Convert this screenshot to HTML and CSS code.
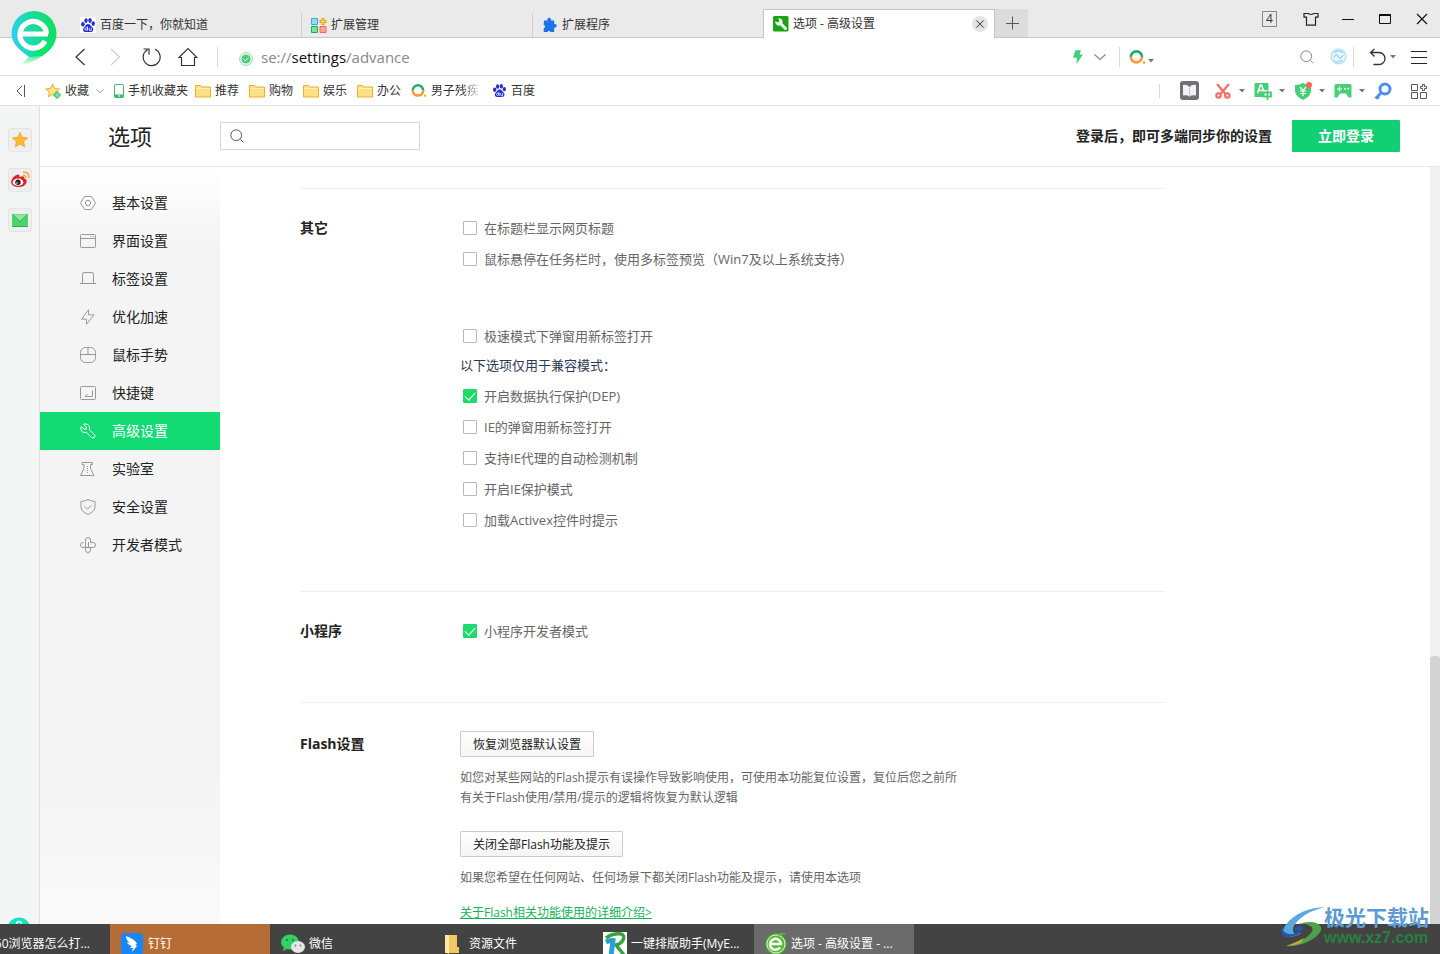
FILE: index.html
```html
<!DOCTYPE html>
<html lang="zh-CN">
<head>
<meta charset="utf-8">
<title>选项 - 高级设置</title>
<link rel="stylesheet" href="styles.css">
</head>
<body>
<svg class="defs" aria-hidden="true">
  <symbol id="paw" viewBox="0 0 16 16">
    <g fill="#2529d8"><ellipse cx="2.900" cy="7.200" rx="1.800" ry="2.300"/><ellipse cx="6" cy="3.600" rx="1.700" ry="2.400"/><ellipse cx="10" cy="3.500" rx="1.700" ry="2.400"/><ellipse cx="13.200" cy="6.600" rx="1.700" ry="2.300"/>
    <path d="M8 7C6 7 5.600 9 4.200 10.200 2.500 11.700 2.800 15 5.500 15h5.200c2.800 0 3.300-3.200 1.600-4.800C10.800 9 10 7 8 7z"/></g>
    <g fill="none" stroke="#fff" stroke-width=".8"><circle cx="6.200" cy="12" r="1.300"/><path d="M7.500 9.500v4M9.300 10.800v2.200q0 .6.700.6h1.300v-2.900"/></g>
  </symbol>
  <symbol id="folder" viewBox="0 0 16 14"><path d="M.5 13V1.500h5L7 3h8.500v10z" fill="#ffdf85" stroke="#e9b228"/><path d="M1 4.500h14" stroke="#fff0bd"/></symbol>
  <symbol id="ring" viewBox="0 0 17 16"><path d="M1.800 8a5.500 5.500 0 0 1 11.200 0" fill="none" stroke="#1fae68" stroke-width="2.600"/><path d="M13 7.800a5.600 5.600 0 0 1-11.200 0" fill="none" stroke="#fb9a32" stroke-width="2.600"/><circle cx="15" cy="13.500" r="1.200" fill="#fb9a32"/></symbol>
  <symbol id="caret" viewBox="0 0 6 4"><path d="M0 0h6L3 3.500z" fill="#777"/></symbol>
  <symbol id="chev" viewBox="0 0 12 8"><path d="M.5 1.500 6 6.500l5.500-5" fill="none" stroke="#888" stroke-width="1.200"/></symbol>
  <symbol id="lens" viewBox="0 0 14 14"><circle cx="6.200" cy="6.200" r="5.400" fill="none" stroke="currentColor"/><path d="m10.500 10.500 2.800 2.800" stroke="currentColor"/></symbol>
</svg>

<header class="chrome">
  <svg class="logo" viewBox="0 0 46 56" role="img" aria-label="360浏览器">
    <defs><linearGradient id="lg" x1="0" y1="0.600" x2="1" y2="0.400"><stop offset="0" stop-color="#2fd0f3"/><stop offset=".5" stop-color="#19dba0"/><stop offset="1" stop-color="#0fe05d"/></linearGradient>
    <linearGradient id="lt" x1="0" y1="0" x2="0" y2="1"><stop offset="0" stop-color="#04e767"/><stop offset=".45" stop-color="#04e767"/><stop offset="1" stop-color="#04e767" stop-opacity="0"/></linearGradient></defs>
    <path d="M23 0a22.500 22.500 0 0 1 22.500 22.500C45.500 33 39 40 31 45l-13 1C7 38 .5 32 .5 22.500A22.500 22.500 0 0 1 23 0z" fill="url(#lg)"/>
    <path d="M44 28C42 40 26 50 11 55q0-3 6-8L31 36z" fill="url(#lt)"/>
    <path d="M10 23h27M35.500 23A13.300 13.300 0 1 0 34 30" fill="none" stroke="#fff" stroke-width="5.200"/>
  </svg>
  <div class="tabs">
    <div class="tab"><svg class="fav white"><use href="#paw"/></svg><span>百度一下，你就知道</span></div>
    <div class="tab"><svg class="fav" viewBox="0 0 16 16"><path d="M.5 1.500h6v6h-6z" fill="#8edaf8" stroke="#36a9da"/><path d="M.5 9.500h6v6h-6z" fill="#7ce39b" stroke="#1cae4f"/><path d="M9 9.500h6v6H9z" fill="#ffa596" stroke="#ef6a5a"/><path d="M12 1v7M8.500 4.500h7" stroke="#e0a41d" stroke-width="3"/><path d="M12 2v5M9.500 4.500h5" stroke="#ffe05b"/></svg><span>扩展管理</span></div>
    <div class="tab"><svg class="fav" viewBox="0 0 16 16"><path d="M2 3.500h3.500a1.900 1.900 0 1 1 3.400 0h3.300V7a1.900 1.900 0 1 1 0 3.600V15H8.700a1.900 1.900 0 0 0-3.400 0H1.700v-3.700a1.900 1.900 0 0 0 0-3.600z" fill="#1c73e8"/></svg><span>扩展程序</span></div>
    <div class="tab active"><svg class="fav" viewBox="0 0 16 16"><rect width="15.500" height="15.500" rx="1.500" fill="#1ba314"/><path d="m7 7 5.500 5.500" stroke="#f1faf0" stroke-width="3" stroke-linecap="round"/><path d="M2.300 5.300 5 6.500 6.500 5 5.300 2.300A3.700 3.700 0 1 1 2.300 5.300z" fill="#f1faf0"/></svg><span>选项 - 高级设置</span>
      <button class="tab-close" aria-label="关闭标签"><svg viewBox="0 0 16 16"><path d="m4 4 8 8M12 4l-8 8" stroke="#444" stroke-width="1.200"/></svg></button></div>
    <button class="newtab" aria-label="新建标签"><svg viewBox="0 0 14 14"><path d="M7.500 .5v13M1 7.500h13" stroke="#555"/></svg></button>
  </div>
  <div class="winctl">
    <button class="count">4</button>
    <button aria-label="皮肤"><svg viewBox="0 0 16 16"><path d="M1 2.500h4.300q2.700 2 5.400 0H15v3.700h-2.500v8h-9v-8H1z" fill="none" stroke="#222" stroke-width="1.200"/></svg></button>
    <button aria-label="最小化"><svg viewBox="0 0 16 16"><path d="M2 8.500h12" stroke="#111"/></svg></button>
    <button aria-label="最大化"><svg viewBox="0 0 16 16"><path d="M2.500 3v9.500h11V3" fill="none" stroke="#111"/><path d="M2 4h12" stroke="#111" stroke-width="2"/></svg></button>
    <button aria-label="关闭"><svg viewBox="0 0 16 16"><path d="m3 3 10 10M13 3 3 13" stroke="#111" stroke-width="1.200"/></svg></button>
  </div>
</header>

<div class="address">
  <nav class="navbtns" aria-label="导航">
    <button aria-label="后退"><svg viewBox="0 0 20 20"><path d="m14.500 2-8.500 8 8.500 8" fill="none" stroke="#333" stroke-width="1.200"/></svg></button>
    <button aria-label="前进"><svg viewBox="0 0 20 20"><path d="m5 2 8.500 8L5 18" fill="none" stroke="#ccc" stroke-width="1.200"/></svg></button>
    <button aria-label="刷新"><svg viewBox="0 0 20 20"><path d="M13 2.300a8.500 8.500 0 1 1-7.500.4M1.500 2H7v5.500" fill="none" stroke="#333" stroke-width="1.200"/></svg></button>
    <button aria-label="主页"><svg viewBox="0 0 20 20"><path d="m1 10.500 9-9 9 9h-2.500v8h-13v-8z" fill="none" stroke="#333" stroke-width="1.200"/></svg></button>
  </nav>
  <i class="sep"></i>
  <svg class="secure" viewBox="0 0 14 14"><circle cx="7" cy="7" r="6.300" fill="none" stroke="#7fdc9f"/><circle cx="7" cy="7" r="4.600" fill="#4ecb7a"/><path d="m4.500 7 2 1.700 3-3.200" fill="none" stroke="#fff"/></svg>
  <div class="url">se://<b>settings</b>/advance</div>
  <button class="bolt" aria-label="极速模式"><svg width="12" height="14" viewBox="0 0 12 14"><path d="M3.500.3H9L7.600 4.500H11L4.300 14l.8-6.300H1z" fill="#40d077"/></svg></button>
  <button class="drop" aria-label="模式菜单"><svg width="12" height="8"><use href="#chev"/></svg></button>
  <i class="sep"></i>
  <button class="engine" aria-label="搜索引擎"><svg width="17" height="16"><use href="#ring"/></svg><svg class="low" width="6" height="4"><use href="#caret"/></svg></button>
  <input class="quick" type="text" aria-label="搜索">
  <button class="grey" aria-label="开始搜索"><svg width="14" height="14"><use href="#lens"/></svg></button>
  <button class="wave" aria-label="智能助手"><svg width="17" height="17" viewBox="0 0 17 17"><circle cx="8.500" cy="8.500" r="7.300" fill="#eaf7ff" stroke="#b5e0fb" stroke-width="1.500"/><path d="m3.500 9.500 3-3 3.500 4 3.500-3.500M4 5q4.500-4 9 0M4 12.500q4.500 3 8.500-.5" fill="none" stroke="#a5d2f6" stroke-width="1.300"/></svg></button>
  <i class="sep"></i>
  <button class="undo" aria-label="恢复标签"><svg width="17" height="18" viewBox="0 0 17 18"><path d="M5.500 1 1.500 4.500l4 4M1.500 4.500H10a5.800 5.800 0 0 1 0 12H4.500" fill="none" stroke="#333" stroke-width="1.300"/></svg><svg width="6" height="4"><use href="#caret"/></svg></button>
  <button class="menu" aria-label="菜单"><svg width="16" height="14" viewBox="0 0 16 14"><path d="M0 1.500h16M0 7.500h16M0 13.500h16" stroke="#222"/></svg></button>
</div>

<div class="bookmarks">
  <button class="fold" aria-label="收起"><svg width="10" height="12" viewBox="0 0 10 12"><path d="M6 1 1 6l5 5M8.500 0v12" fill="none" stroke="#555"/></svg></button>
  <a class="mark" href="#"><svg width="16" height="16" viewBox="0 0 16 16"><path d="m7.500 1 2 4.400 4.800.5-3.600 3.200 1 4.800-4.200-2.400-4.200 2.400 1-4.800L.7 5.900l4.800-.5z" fill="#ffe48e" stroke="#efb036"/><path d="M12 8.500v7M8.500 12h7" stroke="#36b96b" stroke-width="3"/><path d="M12 9.500v5M9.500 12h5" stroke="#a5efc0"/></svg>收藏</a>
  <svg class="favdrop" width="8" height="6"><use href="#chev"/></svg>
  <a class="mark" href="#"><svg width="10" height="14" viewBox="0 0 10 14"><rect x=".5" y=".5" width="9" height="13" rx="1" fill="#fff" stroke="#3cb96c"/><path d="M.5 10.500h9v3h-9z" fill="#3cb96c"/><path d="M4 12h2" stroke="#fff"/></svg>手机收藏夹</a>
  <a class="mark dir" href="#"><svg width="16" height="14"><use href="#folder"/></svg>推荐</a>
  <a class="mark dir" href="#"><svg width="16" height="14"><use href="#folder"/></svg>购物</a>
  <a class="mark dir" href="#"><svg width="16" height="14"><use href="#folder"/></svg>娱乐</a>
  <a class="mark dir" href="#"><svg width="16" height="14"><use href="#folder"/></svg>办公</a>
  <a class="mark dir" href="#"><svg width="16" height="15"><use href="#ring"/></svg><span class="fade">男子残疾人</span></a>
  <a class="mark" href="#"><svg width="15" height="15"><use href="#paw"/></svg>百度</a>
  <div class="tools">
    <i class="sep"></i>
    <button class="book" aria-label="阅读"><svg width="19" height="19" viewBox="0 0 19 19"><rect width="19" height="19" rx="3" fill="#6f7078"/><path d="M3 4q4-1 6.500 2Q12 3 16 4v10.500q-4-1-6.500 1-2.500-2-6.500-1z" fill="#f2f2f2"/><path d="M9.500 6v9.500" stroke="#c9c9c9"/></svg></button>
    <button class="tool" aria-label="截图"><svg width="18" height="18" viewBox="0 0 18 18"><g fill="none" stroke="#fb6e66" stroke-width="2.200"><path d="m3 2 9 10.500M15 2 6 12.500"/><circle cx="4.500" cy="13.500" r="2.200"/><circle cx="13.300" cy="13.500" r="2.200"/></g></svg><svg width="6" height="4"><use href="#caret"/></svg></button>
    <button class="tool" aria-label="翻译"><svg width="18" height="18" viewBox="0 0 18 18"><path d="M1.500 1h12q1 0 1 1v6H9v7H1.500q-1 0-1-1V2q0-1 1-1z" fill="#46cf76"/><path d="m3.500 11 3-8h1l3 8M4.500 8.500h5" fill="none" stroke="#fff" stroke-width="1.500"/><path d="M9.500 10.500h7.500v4H9.500zM13.500 8.500V18" fill="none" stroke="#46cf76" stroke-width="1.800"/></svg><svg width="6" height="4"><use href="#caret"/></svg></button>
    <button class="tool" aria-label="优惠"><svg width="18" height="18" viewBox="0 0 18 18"><path d="M9 1q3 2 8 2v6q0 5-8 9-8-4-8-9V3q5 0 8-2z" fill="#46cf76"/><path d="m6 5 3 3.500L12 5M9 8v6M6 9h6M6 11.500h6" fill="none" stroke="#fff" stroke-width="1.200"/><circle cx="15" cy="3" r="3" fill="#ff6257"/></svg><svg width="6" height="4"><use href="#caret"/></svg></button>
    <button class="tool" aria-label="游戏"><svg width="18" height="18" viewBox="0 0 18 18"><path d="M2 2h14q1.500 0 1.500 2v11.500h-3l-2.500-4H6l-2.500 4h-3V4Q.5 2 2 2z" fill="#46cf76"/><path d="M3 7h5M5.500 4.500v5" stroke="#fff" stroke-width="1.200"/><circle cx="11" cy="6.800" r="1" fill="#fff"/><circle cx="14.300" cy="6.800" r="1" fill="#fff"/></svg><svg width="6" height="4"><use href="#caret"/></svg></button>
    <button class="key" aria-label="密码"><svg width="18" height="18" viewBox="0 0 18 18"><circle cx="11" cy="7" r="5" fill="none" stroke="#4e8df7" stroke-width="3"/><path d="m7.500 10.500-6 6M3 15l2 1.500" stroke="#4e8df7" stroke-width="2.800"/></svg></button>
    <button aria-label="扩展"><svg width="16" height="16" viewBox="0 0 16 16"><g fill="none" stroke="#555"><path d="M.5 1.500h6v6h-6zM.5 9.500h6v6h-6zM9.500 9.500h6v6h-6z"/><path d="M11.500 1.500h2v2h2v2h-2v2h-2v-2h-2v-2h2z"/></g></svg></button>
  </div>
</div>

<div class="body">
  <aside class="strip">
    <button aria-label="收藏"><svg viewBox="0 0 22 22"><path d="m11 3.500 2.200 4.900 5.300.6-4 3.600 1.200 5.300-4.700-2.800-4.700 2.800 1.200-5.300-4-3.600 5.300-.6z" fill="#fdbd2b" stroke="#f29a1f" stroke-width=".8"/></svg></button>
    <button aria-label="微博"><svg viewBox="0 0 22 22"><path d="M2 13q1-6 7-7.500 2 0 1.500 2.500 5-2 5 1.500 3 1 2 4-2 5-9 4.500-6-.5-6.500-5z" fill="#e3202c"/><ellipse cx="9" cy="13.200" rx="5.300" ry="3.600" fill="#fff"/><circle cx="9" cy="13.200" r="2.700" fill="#222"/><circle cx="8" cy="14" r=".8" fill="#fff"/><path d="M14 6.500q3-.5 3 2.500M14 3.500q6-1 6 5.500" fill="none" stroke="#f1a23b" stroke-width="1.500"/></svg></button>
    <button aria-label="邮箱"><svg viewBox="0 0 22 22"><rect x="3" y="5" width="16" height="12.500" rx="1" fill="#4fd36d"/><path d="m3.500 5.500 7.500 7 7.500-7z" fill="#8ee79b"/><path d="m3.500 5.500 7.500 7 7.500-7M3 17.500h16" fill="none" stroke="#22b455"/></svg></button>
    <svg class="helper" viewBox="0 0 24 24"><circle cx="12" cy="12" r="11.500" fill="#14e5bd"/><circle cx="12" cy="7" r="2.500" fill="none" stroke="#fff" stroke-width="1.400"/></svg>
  </aside>

  <div class="page">
    <header class="top">
      <h1>选项</h1>
      <div class="search"><svg width="14" height="14"><use href="#lens"/></svg><input type="search" aria-label="搜索设置"></div>
      <span class="tip">登录后，即可多端同步你的设置</span>
      <button class="login">立即登录</button>
    </header>
    <div class="cols">
      <nav class="side" aria-label="设置分类">
        <a href="#"><svg viewBox="0 0 16 16"><path d="M4.500 1.500h7L15.500 8l-4 6.500h-7L.5 8z"/><circle cx="8" cy="8" r="2.700"/></svg>基本设置</a>
        <a href="#"><svg viewBox="0 0 16 16"><rect x=".5" y="1.500" width="15" height="13" rx="1"/><path d="M1 5.500h14M10.500 3.500h1M13 3.500h1"/></svg>界面设置</a>
        <a href="#"><svg viewBox="0 0 16 16"><path d="M2.500 12V3q0-1.500 1.500-1.500h8q1.500 0 1.500 1.500v9M0 12.500h16"/></svg>标签设置</a>
        <a href="#"><svg viewBox="0 0 16 16"><path d="M8.500.8v5H14L6.500 15.200v-5h-5z"/></svg>优化加速</a>
        <a href="#"><svg viewBox="0 0 16 16"><rect x=".5" y=".5" width="15" height="15" rx="5"/><path d="M.5 7.500h15M8 .5v7"/></svg>鼠标手势</a>
        <a href="#"><svg viewBox="0 0 16 16"><rect x=".5" y="1.500" width="15" height="13" rx="1"/><path d="M12.500 5.500v6H5L7.500 9"/></svg>快捷键</a>
        <a href="#" class="on"><svg viewBox="0 0 16 16"><path d="M3.500 1.300 6.200 4v2.200H4L1.200 3.500Q-.3 7 2.500 9q1.800 1 4 .4l5 5.200q1.500 1 3-.3 1-1.500-.2-2.800L9.500 6.800Q10 3 8 1.700 6 .3 3.500 1.300z"/></svg>高级设置</a>
        <a href="#"><svg viewBox="0 0 16 16"><path d="M2 1.500h10.500v2h-2v4l3.500 7H.5l3.500-7v-4H2z"/><path d="M7.500 5v7" stroke-dasharray="1 1"/></svg>实验室</a>
        <a href="#"><svg viewBox="0 0 16 16"><path d="M8 .5q3.500 2 7 2v5.500q0 4.500-7 7.500Q1 12.500 1 8V2.500q3.500 0 7-2z"/><path d="m4.500 7.500 3 2.700 4-4.200"/></svg>安全设置</a>
        <a href="#"><svg viewBox="0 0 16 16"><path d="M5.500 10.500V3a2.500 2.500 0 0 1 5 0v2.500H13a2.500 2.500 0 0 1 0 5H3a2.500 2.500 0 0 1 0-5h.5M8.500 5v5M5.500 10.500V13a2.500 2.500 0 0 0 5 0v-2.500"/></svg>开发者模式</a>
      </nav>
      <main class="content">
        <section class="block other">
          <h2>其它</h2>
          <div class="fields">
            <label><input type="checkbox">在标题栏显示网页标题</label>
            <label><input type="checkbox">鼠标悬停在任务栏时，使用多标签预览（Win7及以上系统支持）</label>
            <label class="apart"><input type="checkbox">极速模式下弹窗用新标签打开</label>
            <p class="note">以下选项仅用于兼容模式：</p>
            <label><input type="checkbox" checked>开启数据执行保护(DEP)</label>
            <label><input type="checkbox">IE的弹窗用新标签打开</label>
            <label><input type="checkbox">支持IE代理的自动检测机制</label>
            <label><input type="checkbox">开启IE保护模式</label>
            <label><input type="checkbox">加载Activex控件时提示</label>
          </div>
        </section>
        <section class="block">
          <h2>小程序</h2>
          <div class="fields"><label><input type="checkbox" checked>小程序开发者模式</label></div>
        </section>
        <section class="block flash">
          <h2>Flash设置</h2>
          <div class="fields">
            <button class="act">恢复浏览器默认设置</button>
            <p>如您对某些网站的Flash提示有误操作导致影响使用，可使用本功能复位设置，复位后您之前所有关于Flash使用/禁用/提示的逻辑将恢复为默认逻辑</p>
            <button class="act">关闭全部Flash功能及提示</button>
            <p class="last">如果您希望在任何网站、任何场景下都关闭Flash功能及提示，请使用本选项</p>
            <a class="more" href="#">关于Flash相关功能使用的详细介绍&gt;</a>
          </div>
        </section>
      </main>
      <div class="scroll"><div class="thumb"></div></div>
    </div>
  </div>
</div>

<footer class="taskbar">
  <button class="task first">360浏览器怎么打...</button>
  <button class="task ding"><svg width="22" height="22" viewBox="0 0 22 22"><rect width="22" height="22" rx="4" fill="#1687fb"/><path d="M5 3q9 3 11 8l-2 1 2 1-5 6 1-4H9l2-2q-4-1-5-4l3 1q-4-3-4-7z" fill="#fff"/></svg>钉钉</button>
  <button class="task"><svg width="24" height="20" viewBox="0 0 24 20"><ellipse cx="9" cy="8" rx="9" ry="7.500" fill="#35cf68"/><path d="m3 13-1 4 4-2z" fill="#35cf68"/><circle cx="6" cy="6" r="1" fill="#17713a"/><circle cx="12" cy="6" r="1" fill="#17713a"/><ellipse cx="17" cy="13" rx="7" ry="6" fill="#e6e6e6"/><circle cx="14.500" cy="11.500" r=".9" fill="#777"/><circle cx="19.500" cy="11.500" r=".9" fill="#777"/></svg>微信</button>
  <button class="task files"><svg width="14" height="20" viewBox="0 0 14 20"><path d="M0 1h12v12h2v6H0z" fill="#f0c761"/><path d="M0 1h4v19l-4-2z" fill="#ffe9a6"/></svg>资源文件</button>
  <button class="task type"><svg width="24" height="24" viewBox="0 0 24 24"><path d="M0 0h24v24H0z" fill="#fff"/><path d="M3 6Q10 1 18 2q4 1 2 6-2 4-7 5l8 10" fill="none" stroke="#37a43b" stroke-width="3.500"/><path d="M3 10q4-2 7-1.500L8 24" fill="none" stroke="#2b9fd8" stroke-width="5"/></svg>一键排版助手(MyE...</button>
  <button class="task cur"><svg width="22" height="22" viewBox="0 0 22 22"><circle cx="11" cy="11" r="10.500" fill="#57bb35"/><circle cx="11" cy="11" r="9" fill="none" stroke="#d9f5c9"/><path d="M5 11h12M16 11a5.500 5.500 0 1 0-1 3.500" fill="none" stroke="#fff" stroke-width="2.600"/><path d="M13 2q4-2 7-1" stroke="#57bb35" stroke-width="2"/></svg>选项 - 高级设置 - ...</button>
</footer>

<div class="mark-site" aria-hidden="true">
  <svg width="46" height="42" viewBox="0 0 46 42"><path d="M45 1Q22 2 9 15 0 25 4 29q5 5 18-2-8 2-9-2-1-6 8-13Q29 5 45 1z" fill="#5ba9dc"/><path d="M2 21q-3 9 6 10 10 0 15-8 0-4-4-3-5 1-5 5 4-2 4-1-3 5-9 4-6-1-7-7z" fill="#2457a4"/><path d="M18 18q18-5 23 3 2 6-10 13-12 7-25 6 14-3 22-10 8-7 2-10-4-3-12-2z" fill="#4f9f4b"/><path d="M6 40q11-4 18-8l-3 5q-8 3-15 3z" fill="#b3b52f"/></svg>
  <div><strong>极光下载站</strong><em>www.xz7.com</em></div>
</div>
</body>
</html>
```
FILE: styles.css
```css
* { box-sizing: border-box; }
body {
  margin: 0;
  height: 100vh;
  display: flex;
  flex-direction: column;
  overflow: hidden;
  position: relative;
  background: #fff;
  color: #333;
  font: 12px/16px "Open Sans", "Noto Sans CJK SC", sans-serif;
}
button, input { font: inherit; color: inherit; }
button { border: 0; padding: 0; background: none; display: flex; align-items: center; justify-content: center; flex: none; }
a { color: inherit; text-decoration: none; }
svg { flex: none; display: block; }
h1, h2, p { margin: 0; }
.defs { position: absolute; width: 0; height: 0; }
.sep { width: 1px; height: 20px; background: #d8d8d8; flex: none; }

/* tab strip */
.chrome { display: flex; flex: none; height: 38px; background: #eaeaea; border-bottom: 1px solid #c6c6c6; padding-left: 71px; justify-content: space-between; }
.logo { position: absolute; left: 11px; top: 11px; width: 46px; height: 56px; z-index: 2; }
.tabs { display: flex; align-items: flex-end; }
.tab { width: 231px; height: 24px; display: flex; align-items: center; gap: 4px; padding: 0 6px 0 9px; border-right: 1px solid #cfcfcf; }
.tab:nth-child(3) { width: 230px; border-right: 0; }
.tab.active { width: 232px; height: 29px; margin-bottom: -1px; background: #fff; border: 1px solid #c6c6c6; border-bottom: 0; }
.fav { width: 16px; height: 16px; }
.white { background: #fff; border-radius: 2px; }
.tab-close { width: 16px; height: 16px; margin-left: auto; border-radius: 50%; background: #e3e3e3; }
.tab-close svg { width: 14px; height: 14px; }
.newtab { width: 33px; height: 28px; background: #dcdcdc; }
.newtab svg { width: 14px; height: 14px; }
.winctl { display: flex; align-items: center; gap: 21px; padding-right: 10px; }
.winctl svg { width: 16px; height: 16px; }
.count { width: 15px; height: 16px; border: 1px solid #888; margin-right: 5px; }

/* address row */
.address { display: flex; flex: none; align-items: center; height: 38px; border-bottom: 1px solid #e0e0e0; padding: 0 13px 0 62px; }
.navbtns { display: flex; margin-right: 11px; }
.navbtns button { width: 36px; height: 30px; }
.navbtns svg { width: 20px; height: 20px; }
.secure { width: 14px; height: 14px; margin: 4px 8px 0 21px; }
.url { flex: 1; font-size: 15px; line-height: 20px; color: #888; }
.url b { font-weight: 400; color: #111; }
.bolt { margin-right: 10px; }
.drop { margin-right: 13px; }
.engine { margin-left: 9px; gap: 2px; }
.low { margin-top: 9px; }
.quick { width: 146px; border: 0; outline: 0; background: none; }
.grey { color: #888; }
.wave { margin: 0 6px 0 16px; }
.undo { margin: 0 15px; gap: 4px; }

/* bookmarks */
.bookmarks { display: flex; flex: none; align-items: center; height: 30px; padding: 0 13px 0 16px; border-bottom: 1px solid #e0e0e0; }
.fold { margin-right: 19px; }
.mark { display: flex; align-items: center; gap: 4px; margin-right: 7px; white-space: nowrap; }
.mark.dir { margin-right: 10px; }
.favdrop { margin-right: 10px; }
.fade { width: 51px; overflow: hidden; -webkit-mask-image: linear-gradient(90deg, #000 60%, transparent 98%); mask-image: linear-gradient(90deg, #000 60%, transparent 98%); }
.tools { display: flex; align-items: center; margin-left: auto; }
.tools .sep { height: 14px; }
.book { margin: 0 15px 0 20px; }
.tool { width: 40px; gap: 7px; justify-content: flex-start; }
.key { margin-right: 19px; }

/* body */
.body { display: flex; flex: 1; min-height: 0; }
.strip { position: relative; flex: none; width: 40px; background: #f4f6f6; border-right: 1px solid #e0e0e0; display: flex; flex-direction: column; align-items: center; gap: 16px; padding-top: 22px; overflow: hidden; }
.strip button { width: 24px; height: 24px; border: 1px solid #e4e4e4; border-radius: 3px; background: #efefef; }
.strip button svg { width: 22px; height: 22px; }
.helper { position: absolute; left: 7px; bottom: -17px; width: 24px; height: 24px; }
.page { flex: 1; min-width: 0; display: flex; flex-direction: column; }
.top { display: flex; flex: none; align-items: center; height: 61px; border-bottom: 1px solid #e8e8e8; padding: 0 40px 0 68px; }
.top h1 { width: 112px; font-size: 22px; line-height: 30px; font-weight: 400; color: #222; }
.search { width: 200px; height: 28px; display: flex; align-items: center; padding: 0 9px; border: 1px solid #d4d4d4; border-radius: 1px; color: #555; }
.search input { flex: 1; min-width: 0; border: 0; outline: 0; background: none; }
.tip { margin: 0 20px 0 auto; font-size: 14px; font-weight: 700; color: #222; }
.login { width: 108px; height: 32px; background: #13cf73; border-radius: 1px; color: #fff; font-size: 14px; font-weight: 700; }
.cols { display: flex; flex: 1; min-height: 0; }
.side { flex: none; width: 180px; padding-top: 17px; background: linear-gradient(#fff, #f4f4f4 80px, #f4f4f4 80%, #fafafa); }
.side a { display: flex; align-items: center; gap: 16px; height: 38px; padding-left: 40px; font-size: 14px; color: #222; }
.side svg { width: 16px; height: 16px; fill: none; stroke: #999; }
.side .on { background: #13db73; color: #fff; }
.side .on svg { stroke: #fff; }
.content { flex: 1; min-width: 0; overflow: hidden; padding: 21px 265px 0 80px; }
.block { display: flex; border-top: 1px solid #f0f0f0; padding-top: 23px; min-height: 111px; }
.other { min-height: 403px; }
.block h2 { flex: none; width: 160px; font-size: 14px; line-height: 31px; font-weight: 700; color: #222; }
.fields { font-size: 13px; color: #666; }
.fields label { display: flex; align-items: center; height: 31px; }
.fields .apart { margin-top: 46px; }
.fields .note { line-height: 28px; margin-bottom: 1px; color: #2b3a55; }
.fields input { appearance: none; position: relative; width: 14px; height: 14px; margin: 0 7px 0 3px; border: 1px solid #b8b8b8; border-radius: 1px; background: #fff; }
.fields input:checked { background: #1bdc6b; border-color: #1bdc6b; }
.fields input:checked::after { content: ""; position: absolute; left: 3px; top: 0; width: 5px; height: 9px; border: solid #fff; border-width: 0 1px 1px 0; transform: rotate(42deg); }
.flash { padding-top: 28px; }
.flash h2 { line-height: 26px; }
.flash .fields { width: 502px; font-size: 12px; line-height: 20px; }
.flash p { margin: 11px 0 23px; }
.flash .last { margin-bottom: 15px; }
.act { height: 26px; padding: 1px 12px 0; border: 1px solid #ccc; border-radius: 1px; background: linear-gradient(#fff, #f5f5f5); color: #222; }
.more { color: #12b556; text-decoration: underline; }
.scroll { flex: none; width: 10px; background: #f1f1f1; display: flex; align-items: flex-end; }
.thumb { width: 10px; height: 268px; background: #d3d3d3; border-radius: 4px 4px 0 0; }

/* taskbar */
.taskbar { display: flex; flex: none; gap: 1px; height: 30px; background: #434344; color: #fff; overflow: hidden; }
.task { width: 160px; height: 40px; justify-content: flex-start; gap: 4px; padding-left: 10px; white-space: nowrap; overflow: hidden; }
.first { width: 109px; padding: 0 19px 0 0; justify-content: flex-end; }
.ding { background: #b66d35; gap: 5px; padding-left: 11px; }
.files { gap: 10px; padding-left: 13px; }
.cur { background: #6b6b6c; padding-left: 11px; }

.mark-site { position: absolute; right: 11px; bottom: 6px; display: flex; align-items: center; }
.mark-site div { display: flex; flex-direction: column; margin-left: -2px; }
.mark-site strong { font-size: 21px; line-height: 22px; font-weight: 700; color: #5d9bd3; }
.mark-site em { font: 16px/20px "Liberation Sans", sans-serif; font-weight: 700; color: #27813e; }
```
